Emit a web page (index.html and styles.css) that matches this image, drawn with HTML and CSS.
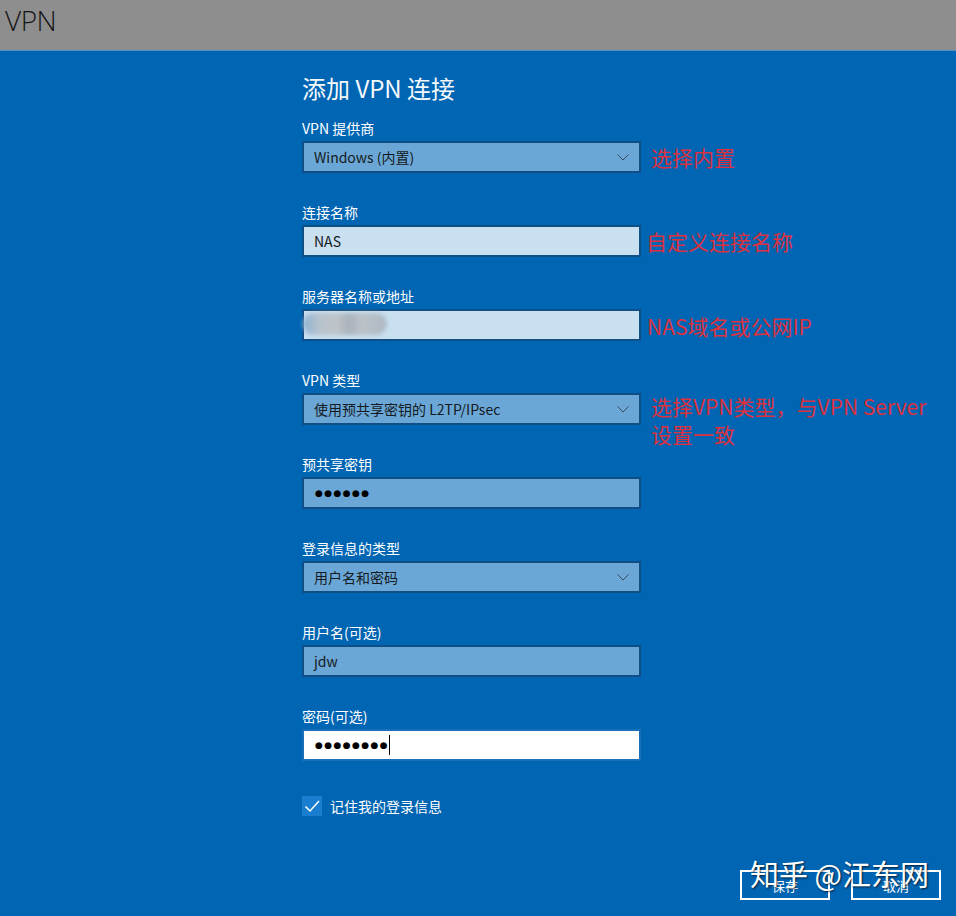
FILE: index.html
```html
<!DOCTYPE html>
<html lang="zh-CN">
<head>
<meta charset="utf-8">
<title>VPN</title>
<link rel="stylesheet" href="styles.css">
</head>
<body>
<header class="topbar"><span class="topbar-title">VPN</span></header>
<main class="page">
  <section class="form">
    <h1 class="title">添加 VPN 连接</h1>

    <div class="group">
      <div class="label">VPN 提供商</div>
      <div class="row">
        <div class="field select">Windows (内置)<svg class="chev" viewBox="0 0 12 7" width="12" height="7"><path d="M0.5 0.5 L6 6 L11.5 0.5" fill="none" stroke="#3b4a5a" stroke-width="1"/></svg></div>
        <span class="note note-a">选择内置</span>
      </div>
    </div>

    <div class="group">
      <div class="label">连接名称</div>
      <div class="row">
        <div class="field light">NAS</div>
        <span class="note note-b">自定义连接名称</span>
      </div>
    </div>

    <div class="group">
      <div class="label">服务器名称或地址</div>
      <div class="row">
        <div class="field light"><span class="blur"></span></div>
        <span class="note note-c">NAS域名或公网IP</span>
      </div>
    </div>

    <div class="group">
      <div class="label">VPN 类型</div>
      <div class="row">
        <div class="field select">使用预共享密钥的 L2TP/IPsec<svg class="chev" viewBox="0 0 12 7" width="12" height="7"><path d="M0.5 0.5 L6 6 L11.5 0.5" fill="none" stroke="#3b4a5a" stroke-width="1"/></svg></div>
        <span class="note note-d">选择VPN类型，与VPN Server<br>设置一致</span>
      </div>
    </div>

    <div class="group">
      <div class="label">预共享密钥</div>
      <div class="row">
        <div class="field select"><span class="dots">●●●●●●</span></div>
      </div>
    </div>

    <div class="group">
      <div class="label">登录信息的类型</div>
      <div class="row">
        <div class="field select">用户名和密码<svg class="chev" viewBox="0 0 12 7" width="12" height="7"><path d="M0.5 0.5 L6 6 L11.5 0.5" fill="none" stroke="#3b4a5a" stroke-width="1"/></svg></div>
      </div>
    </div>

    <div class="group">
      <div class="label">用户名(可选)</div>
      <div class="row">
        <div class="field select">jdw</div>
      </div>
    </div>

    <div class="group">
      <div class="label">密码(可选)</div>
      <div class="row">
        <div class="field white"><span class="dots">●●●●●●●●</span><span class="caret"></span></div>
      </div>
    </div>

    <label class="check">
      <span class="box"><svg viewBox="0 0 20 20" width="20" height="20"><path d="M3.5 10.5 L8 15 L17 5" fill="none" stroke="#ffffff" stroke-width="1.5"/></svg></span>
      <span class="check-text">记住我的登录信息</span>
    </label>
  </section>

  <footer class="actions">
    <div class="btn">保存</div>
    <div class="btn">取消</div>
    <div class="watermark">知乎 @江东网</div>
  </footer>
</main>
</body>
</html>
```

FILE: styles.css
```css
html, body {
  margin: 0;
  padding: 0;
}
body {
  width: 956px;
  height: 916px;
  overflow: hidden;
  background: #0065b3;
  font-family: "Noto Sans CJK SC", "Noto Sans", sans-serif;
  color: #ffffff;
}
.topbar {
  height: 50px;
  background: #8e8e8e;
  border-bottom: 1px solid #4f92c8;
  display: flex;
  align-items: center;
}
.topbar-title {
  font-family: "Open Sans", "Noto Sans", sans-serif;
  font-size: 28px;
  font-weight: 300;
  color: #161616;
  margin-left: 5px;
  margin-top: -11px;
  letter-spacing: -0.5px;
}
.page {
  position: relative;
  height: 865px;
}
.form {
  padding-left: 302px;
  padding-top: 21px;
  width: 339px;
}
.title {
  margin: 0 0 14px 0;
  font-size: 24px;
  font-weight: 400;
  line-height: 32px;
  height: 32px;
  color: #f4f8fc;
}
.group {
  margin-bottom: 29px;
}
.label {
  font-size: 14px;
  line-height: 20px;
  height: 20px;
  margin-bottom: 3px;
  color: #ffffff;
}
.row {
  position: relative;
}
.field {
  box-sizing: border-box;
  width: 339px;
  height: 32px;
  border: 2px solid #0f4f86;
  display: flex;
  align-items: center;
  padding-left: 10px;
  font-size: 14px;
  color: #151a20;
  position: relative;
}
.select {
  background: #6aa7d7;
}
.light {
  background: #c9e0f1;
}
.white {
  background: #ffffff;
  border-color: #1b6fb9;
}
.chev {
  position: absolute;
  right: 10px;
  top: 11px;
}
.dots {
  font-family: "DejaVu Sans", sans-serif;
  font-size: 9px;
  letter-spacing: 1.4px;
  color: #000;
  margin-left: 1px;
}
.caret {
  display: inline-block;
  width: 1px;
  height: 20px;
  background: #000;
}
.blur {
  position: absolute;
  left: -1px;
  top: 2px;
  width: 84px;
  height: 22px;
  border-radius: 11px;
  background: linear-gradient(90deg, #8eb3d3 0%, #b8c3cc 20%, #c0c4c8 40%, #a9b2ba 55%, #bcc3c9 70%, #aeb9c4 100%);
  filter: blur(2px);
}
.note {
  position: absolute;
  top: 50%;
  transform: translateY(-50%);
  font-size: 21px;
  line-height: 28px;
  color: #dc3140;
  white-space: nowrap;
}
.note-a { left: 349px; }
.note-b { left: 344px; }
.note-c { left: 345px; transform: translateY(-45%); }
.note-d { left: 349px; top: -1px; transform: none; }
.check {
  display: flex;
  align-items: center;
  padding-top: 6px;
}
.box {
  width: 20px;
  height: 20px;
  background: #1a7ed0;
  display: block;
}
.box svg {
  display: block;
}
.check-text {
  font-size: 14px;
  margin-left: 8px;
  color: #ffffff;
}
.actions {
  position: absolute;
  right: 15px;
  top: 819px;
  display: flex;
  gap: 21px;
}
.btn {
  box-sizing: border-box;
  width: 90px;
  height: 30px;
  border: 2px solid #ffffff;
  display: flex;
  align-items: center;
  justify-content: center;
  font-size: 13px;
  color: #ffffff;
}
.watermark {
  position: absolute;
  left: -190px;
  top: -17px;
  right: 0;
  padding-left: 200px;
  font-size: 29px;
  line-height: 40px;
  color: #ffffff;
  text-shadow: 1px 1px 2px rgba(0,0,0,0.7);
  white-space: nowrap;
}
```
